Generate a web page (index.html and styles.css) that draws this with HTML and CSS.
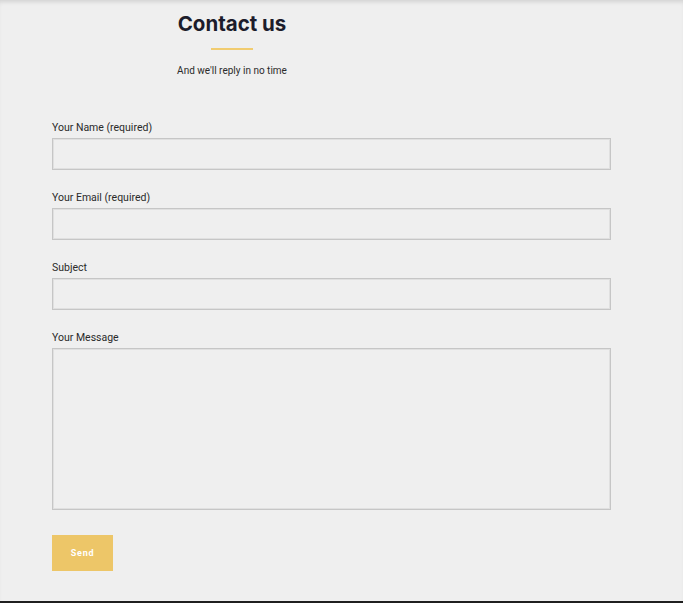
FILE: index.html
```html
<!DOCTYPE html>
<html>
<head>
<meta charset="utf-8">
<link rel="stylesheet" href="styles.css">
</head>
<body>
<div class="page">
  <header class="head">
    <h1 class="title">Contact us</h1>
    <div class="rule"></div>
    <p class="sub">And we'll reply in no time</p>
  </header>
  <form class="form">
    <label class="field">
      <span class="label">Your Name (required)</span>
      <input class="input" type="text">
    </label>
    <label class="field">
      <span class="label">Your Email (required)</span>
      <input class="input" type="text">
    </label>
    <label class="field">
      <span class="label">Subject</span>
      <input class="input" type="text">
    </label>
    <label class="field">
      <span class="label">Your Message</span>
      <textarea class="input area"></textarea>
    </label>
    <button class="send" type="button">Send</button>
  </form>
</div>
</body>
</html>
```
FILE: styles.css
```css
html, body {
  margin: 0;
  padding: 0;
  background: #ffffff;
}
body {
  width: 685px;
  height: 603px;
  overflow: hidden;
  font-family: Roboto, "Liberation Sans", sans-serif;
}
.page {
  width: 683px;
  height: 601px;
  background: #efefef;
  border-bottom: 2px solid #1f1f1f;
  box-shadow: inset 0 4px 4px -2px rgba(0,0,0,0.12);
  display: flex;
  flex-direction: column;
}
.head {
  width: 464px;
  display: flex;
  flex-direction: column;
  align-items: center;
  padding-top: 11px;
}
.title {
  margin: 0;
  font-family: Inter, "Open Sans", sans-serif;
  font-weight: 700;
  font-size: 20.5px;
  line-height: 25px;
  color: #1c1c2b;
  letter-spacing: 0;
}
.rule {
  width: 42px;
  height: 2px;
  background: #f1cc70;
  margin-top: 12px;
}
.sub {
  margin: 15px 0 0;
  font-size: 10px;
  line-height: 12px;
  color: #2b2b2b;
}
.form {
  display: flex;
  flex-direction: column;
  padding: 45px 0 0 52px;
  width: 559px;
}
.field {
  display: flex;
  flex-direction: column;
  margin-bottom: 22px;
}
.label {
  font-size: 10.5px;
  line-height: 12px;
  color: #2a2a2a;
  margin-bottom: 4px;
}
.input {
  box-sizing: border-box;
  width: 559px;
  height: 32px;
  margin: 0;
  border: 1px solid #c6c6c6;
  box-shadow: inset 0 0 0 1px #e0e0e0;
  background: #efefef;
  outline: none;
  resize: none;
  font-family: inherit;
}
.area {
  height: 162px;
  margin-bottom: 3px;
}
.send {
  align-self: flex-start;
  width: 61px;
  height: 36px;
  border: none;
  background: #edc668;
  color: #ffffff;
  font-family: Roboto, sans-serif;
  font-weight: 700;
  font-size: 9px;
  letter-spacing: 0.8px;
  padding: 0;
}
```
